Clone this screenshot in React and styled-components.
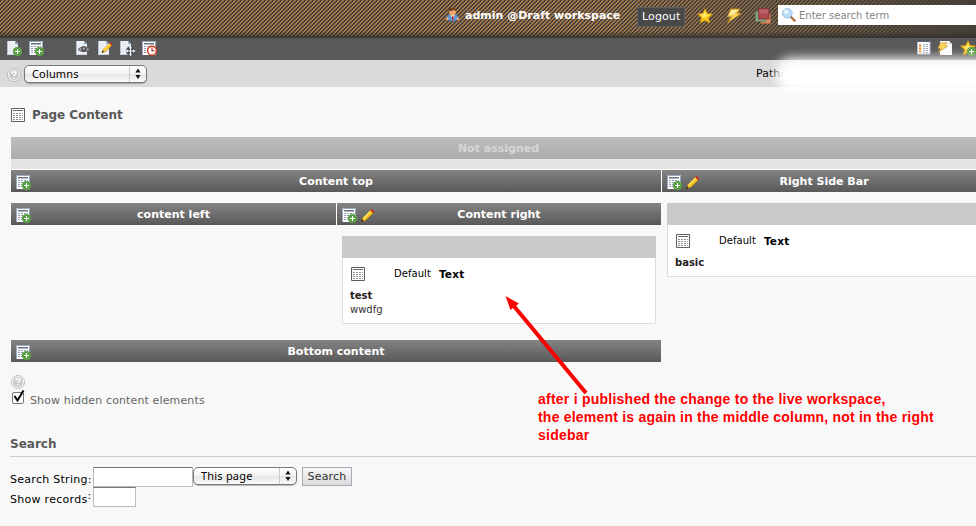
import React from "react";
import styled, { createGlobalStyle, css } from "styled-components";

const Global = createGlobalStyle`
  * { box-sizing: border-box; }
  html, body { margin: 0; overflow: hidden; background: #f8f8f8; }
  body { font-family: "DejaVu Sans", Verdana, sans-serif; font-size: 11px; color: #000; }
`;

const Page = styled.div`
  width: 976px;
  height: 526px;
  overflow: hidden;
  position: relative;
`;

const Text = styled.span`
  display: block;
  white-space: pre;
  line-height: 14px;
  font-size: ${(p) => p.$size || 11}px;
  font-weight: ${(p) => (p.$bold ? 700 : 400)};
  color: ${(p) => p.$color || "#000"};
  letter-spacing: ${(p) => p.$track || 0}px;
  ${(p) => p.$left !== undefined && css`margin-left: ${p.$left}px;`}
  ${(p) => p.$top !== undefined && css`margin-top: ${p.$top}px;`}
`;

const Svg = styled.svg`
  display: block;
  flex: none;
  width: ${(p) => p.$w || 16}px;
  height: ${(p) => p.$w || 16}px;
  margin-left: ${(p) => p.$left || 0}px;
  margin-top: ${(p) => p.$top || 0}px;
  overflow: visible;
`;

/* ---------- icons ---------- */

const Plus = () => (
  <g>
    <circle cx="11.5" cy="11.5" r="4.6" fill="#4f9a3c" />
    <circle cx="11.5" cy="11.5" r="3.900" fill="none" stroke="#6fae55" strokeWidth="0.7" />
    <path d="M11.5 9v5M9 11.5h5" stroke="#fff" strokeWidth="1.1" />
  </g>
);

const Sheet = () => (
  <g>
    <path d="M1 1h8l3 3v11h-11z" fill="#eef1f5" />
    <path d="M1.500 1v14" stroke="#b4c0d0" />
    <path d="M1 14.500h11" stroke="#ccd4df" />
    <path d="M3 4h5M3 6.500h7M3 9h7M3 11.500h7" stroke="#dfe5ec" />
    <path d="M9 1v3.200h3.200z" fill="#8fb0cf" />
  </g>
);

const Table = () => (
  <g>
    <path d="M1 1h14v14h-14z" fill="#fff" />
    <path d="M1.500 15v-13.500h13v8" stroke="#9aa7bd" fill="none" />
    <path d="M3 3h10v1.500h-10z" fill="#667180" />
    <path d="M3 6.500h10M3 8.500h10M3 10.500h10M3 12.500h10" stroke="#8f9cb3" strokeDasharray="2 1" />
  </g>
);

const NewPage = (p) => <Svg viewBox="0 0 16 16" {...p}><Sheet /><Plus /></Svg>;
const NewContent = (p) => <Svg viewBox="0 0 16 16" {...p}><Table /><Plus /></Svg>;

const ViewPage = (p) => (
  <Svg viewBox="0 0 16 16" {...p}>
    <Sheet />
    <path d="M3 9.500q5.500-5.500 12 0q-6 4.500-12 0z" fill="#a5a5a5" stroke="#666" strokeWidth="1" />
    <circle cx="9" cy="9" r="2.700" fill="#555" />
    <circle cx="9" cy="8.500" r="1" fill="#bbb" />
  </Svg>
);

const PencilShape = () => (
  <g>
    <path d="M1.500 14.500l1.600-4.200 8-8 3 2.900-8.200 8z" fill="#fcc81e" stroke="#b8720c" strokeWidth="0.6" />
    <path d="M3.700 10.700l8-7.700" stroke="#ffe97a" strokeWidth="1.200" />
    <path d="M11 2.300l1.500-1.300 2.800 2.600-1.400 1.600z" fill="#d3261c" />
    <path d="M1 15l1-3 2 1.800z" fill="#2a1a0d" />
  </g>
);

const Pencil = (p) => <Svg viewBox="0 0 16 16" {...p}><PencilShape /></Svg>;
const EditPage = (p) => (
  <Svg viewBox="0 0 16 16" {...p}>
    <Sheet />
    <g transform="translate(4 1.500) scale(.76)"><PencilShape /></g>
  </Svg>
);

const MovePage = (p) => (
  <Svg viewBox="0 0 16 16" {...p}>
    <Sheet />
    <circle cx="11.500" cy="11" r="4.600" fill="#444b59" />
    <path d="M11.500 7.500v7M8 11h7" stroke="#fff" strokeWidth="1" />
    <path d="M11.500 6l1.700 2.200h-3.400zM11.500 16l1.700-2.200h-3.400zM6.500 11l2.200-1.700v3.400zM16.500 11l-2.200-1.700v3.400z" fill="#fff" />
  </Svg>
);

const History = (p) => (
  <Svg viewBox="0 0 16 16" {...p}>
    <Table />
    <circle cx="11" cy="10.700" r="4.400" fill="#fff" stroke="#d8361f" strokeWidth="1.400" />
    <path d="M11 7.800v3h2.400" fill="none" stroke="#902010" strokeWidth="1.100" />
  </Svg>
);

const GrayTable = (p) => (
  <Svg viewBox="0 0 16 16" {...p}>
    <path d="M1.500 1.500h13v13h-13z" fill="#fff" stroke="#5b5f63" />
    <path d="M3 3.500h10" stroke="#666b70" />
    <path d="M3 6.500h10M3 8.500h10M3 10.500h10M3 12.500h10" stroke="#8b8f93" strokeDasharray="2 1" />
  </Svg>
);

const Bolt = () => (
  <path d="M5 1h9l-3.200 4.500h4.200l-13.500 9.500 4.200-6.200h-4.500z" fill="#fbd35a" stroke="#c89226" strokeWidth="0.800" />
);
const BoltIcon = (p) => (
  <Svg viewBox="0 0 16 16" {...p}>
    <Bolt /><path d="M5.800 2.200h5.500l-4 4.300h-4.500z" fill="#fff0a8" />
  </Svg>
);

const starPath = "M8 .8l2.100 4.800 5.300.5-4 3.600 1.300 5.300-4.700-2.700-4.700 2.700 1.300-5.300-4-3.600 5.300-.5z";
const Star = ({ plus, ...p }) => (
  <Svg viewBox="0 0 16 16" {...p}>
    <path d={starPath} fill="#fcc91b" stroke="#db970c" strokeWidth="0.800" />
    <path d="M8 2.500l1.500 4 3.500.5-4 2-4.500 1 1-2-2.500-1.500 3.700-.500z" fill="#ffe764" />
    {plus && <Plus />}
  </Svg>
);

const User = (p) => (
  <Svg viewBox="0 0 16 16" {...p}>
    <path d="M1.500 12.500q.5-4.500 4-4.500h5q3.500 0 4 4.500q-1 2.500-6.500 2.500t-6.500-2.500z" fill="#5a98da" stroke="#28598f" strokeWidth="0.500" />
    <path d="M6 8.500h4.500l-2.200 5z" fill="#eee" /><path d="M7.700 9.500h1.200l.5 3-1.200 1.500-1-1.500z" fill="#c6322b" />
    <circle cx="8" cy="5.700" r="3.600" fill="#eda873" />
    <path d="M3.800 5q0-4.300 4.300-4.300t4.200 4.300q-1-1.500-2.500-1.700q-4 1.200-6 1.700z" fill="#744017" />
    <circle cx="2.300" cy="12.600" r="1.500" fill="#eda873" /><circle cx="13.700" cy="12.600" r="1.500" fill="#eda873" />
  </Svg>
);

const Workspaces = (p) => (
  <Svg viewBox="0 0 16 16" {...p}>
    <path d="M6 6h9.500v9.500h-9.500z" fill="#dd9068" stroke="#a45e3d" strokeWidth="0.800" />
    <path d="M.5 3.500h10v10h-10z" fill="#86a982" stroke="#597a58" strokeWidth="0.800" />
    <path d="M3.500.5h10.500v10.500h-10.500z" fill="#ae4a50" stroke="#7d3339" strokeWidth="0.800" />
    <path d="M4.500 1.500h8.500v4h-8.500z" fill="#bd6266" />
  </Svg>
);

const Magnifier = (p) => (
  <Svg viewBox="0 0 16 16" {...p}>
    <path d="M10 10l3.600 3.600" stroke="#b8743d" strokeWidth="2.400" strokeLinecap="round" />
    <path d="M9.500 9.500l1.500 1.500" stroke="#777" strokeWidth="1.500" />
    <circle cx="6.300" cy="6.300" r="4.800" fill="#bcdcf8" stroke="#9dbfe4" strokeWidth="1" />
    <circle cx="5" cy="4.700" r="2.200" fill="#e7f5ff" />
  </Svg>
);

const ListIcon = (p) => (
  <Svg viewBox="0 0 16 16" {...p}>
    <path d="M1.500 1.500h12.500v12.500h-12.500z" fill="#fff" stroke="#aebcd4" />
    <path d="M1 1.500h13" stroke="#526179" />
    <path d="M3 5.500h2.200M3 8.500h2.200M3 11.500h2.200" stroke="#ef7c12" strokeWidth="2" />
    <path d="M7 4.500h5M7 6.500h5M7 8.500h5M7 10.500h5M7 12.500h5" stroke="#8590a3" strokeWidth="0.800" strokeDasharray="2 1" />
  </Svg>
);

const BoltPage = (p) => (
  <Svg viewBox="0 0 16 16" {...p}>
    <path d="M3 1h9l3 3v11h-12z" fill="#fafafa" /><path d="M12 1v3h3z" fill="#ccd3dc" />
    <g transform="translate(0 2) scale(.72)"><Bolt /></g>
  </Svg>
);

const Help = (p) => (
  <Svg viewBox="0 0 16 16" {...p}>
    <circle cx="8" cy="8" r="6.500" fill="#c8c8c8" stroke="#b4b4b4" strokeWidth="0.800" />
    <circle cx="8" cy="8" r="5.500" fill="none" stroke="#f5f5f5" strokeWidth="1.200" />
    <path d="M6 6.600q.1-1.900 2-1.900t2 1.500q0 .9-1 1.400t-1 1.300M8 10v1.500" stroke="#fff" strokeWidth="1.600" fill="none" />
  </Svg>
);

/* ---------- header bars ---------- */

const twill = `url("data:image/svg+xml,%3Csvg xmlns='http://www.w3.org/2000/svg' width='4' height='4' shape-rendering='crispEdges'%3E%3Cpath fill='%23454341' d='M0 0h4v4H0z'/%3E%3Cpath fill='%23a87946' d='M2 0h2v1H2zM1 1h2v1H1zM0 2h2v1H0zM0 3h1v1H0zM3 3h1v1H3z'/%3E%3C/svg%3E")`;

const TopBar = styled.header`
  height: 38px;
  display: flex;
  align-items: flex-start;
  background:
    linear-gradient(to bottom, rgba(50,48,46,0) 31px, rgba(50,48,46,.9) 38px),
    linear-gradient(to right, rgba(60,58,54,0) 600px, rgba(60,58,54,.25) 750px, rgba(60,58,54,.85) 976px),
    ${twill};
`;

const Logout = styled.button`
  width: 48px;
  height: 20px;
  margin: 7px 0 0 17px;
  padding: 0;
  display: flex;
  justify-content: center;
  align-items: center;
  border: 1px solid #626262;
  background: #484848;
  font-family: inherit;
`;

const SearchBox = styled.div`
  width: 220px;
  height: 20px;
  margin: 5px -22px 0 7px;
  display: flex;
  align-items: center;
  flex: none;
  background: #fff;
`;

const ToolBar = styled.nav`
  height: 22px;
  display: flex;
  align-items: flex-start;
  background: #595959;
`;

const FunctionBar = styled.div`
  height: 27px;
  display: flex;
  align-items: flex-start;
  background: #dadada;
`;

const Smudge = styled.div`
  position: absolute;
  left: 784px;
  top: 66px;
  width: 260px;
  height: 18px;
  border-radius: 8px;
  background: #fff;
  box-shadow: 0 0 11px 8px #fff;
`;

const Select = styled.div`
  width: ${(p) => p.$w}px;
  height: ${(p) => p.$h}px;
  margin-top: ${(p) => p.$top}px;
  margin-left: ${(p) => p.$left || 0}px;
  padding-left: 7px;
  display: flex;
  align-items: center;
  flex: none;
  border: 1px solid #777;
  border-radius: 5px;
  box-shadow: 0 1px 1px rgba(0,0,0,.25);
  background: linear-gradient(#fff, #f3f3f3 48%, #e6e6e6 52%, #fafafa);
  font-family: "Noto Sans", "Open Sans", sans-serif;
`;

const Arrows = styled.svg`
  display: block;
  width: 17px;
  height: 16px;
  margin-left: auto;
  border-left: 1px solid #c8c8c8;
`;

const Dropdown = ({ children, track, ...p }) => (
  <Select {...p}>
    <Text $track={track}>{children}</Text>
    <Arrows viewBox="0 0 16 16"><path d="M8 2.500l2.600 4h-5.200zM8 13l2.600-4h-5.200z" fill="#111" /></Arrows>
  </Select>
);

/* ---------- column grid ---------- */

const TitleRow = styled.div`
  height: 50px;
  padding: 20px 0 0 10px;
  display: flex;
  align-items: flex-start;
`;

const Grid = styled.main`
  width: 975px;
  margin-left: 11px;
`;

const Unassigned = styled.div`
  height: 22px;
  display: flex;
  align-items: center;
  justify-content: center;
  background: linear-gradient(#bebebe, #acacac);
`;

const UnassignedBody = styled.div`
  height: 11px;
  background: #e4e4e4;
  border-bottom: 1px solid #fff;
`;

const Columns = styled.div`
  display: grid;
  grid-template-columns: ${(p) => p.$cols};
  column-gap: 1px;
`;

const Cell = styled.section`
  height: ${(p) => p.$h}px;
  min-width: 0;
`;

const Spacer = styled.div`
  height: 11px;
`;

const Bar = styled.div`
  height: 22px;
  padding-left: 4px;
  display: flex;
  align-items: center;
  background: linear-gradient(#838383, #595959);
  box-shadow: -1px 0 0 #fff;
`;

const BarTitle = styled.div`
  flex: 1;
  display: flex;
  justify-content: center;
  padding-top: 2px;
  margin-left: ${(p) => p.$shift}px;
`;

const Card = styled.article`
  width: ${(p) => p.$w}px;
  height: ${(p) => p.$h}px;
  margin: 11px 0 0 5px;
  border: 1px solid #ddd;
  border-top: 0;
  background: #fff;
`;

const CardTop = styled.div`
  height: 22px;
  margin: 0 -1px;
  background: #c9c9c9;
`;

const CardHead = styled.div`
  display: flex;
  align-items: flex-start;
  height: 31px;
  padding: 8px 0 0 7px;
`;

const CardBody = styled.div`
  padding-left: 7px;
`;

const ColumnBar = ({ title, edit }) => (
  <Bar>
    <NewContent $top={2} />
    {edit && <Pencil $w={15} $left={3} $top={3} />}
    <BarTitle $shift={edit ? -38 : -20}><Text $bold $color="#fff">{title}</Text></BarTitle>
  </Bar>
);

const Element = ({ title, body, ...p }) => (
  <Card {...p}>
    <CardTop />
    <CardHead>
      <GrayTable />
      <Text $size={10} $left={28} $top={1} $track={0.05}>Default</Text>
      <Text $size={10.5} $bold $left={8} $top={1} $track={0.2}>Text</Text>
    </CardHead>
    <CardBody>
      <Text $size={10} $bold $color="#222">{title}</Text>
      {body && <Text $size={10} $color="#333">{body}</Text>}
    </CardBody>
  </Card>
);

/* ---------- options and search ---------- */

const Options = styled.div`
  height: 74px;
  padding: 12px 0 0 10px;
`;

const CheckRow = styled.div`
  display: flex;
  align-items: flex-start;
  height: 18px;
`;

const SearchHead = styled.div`
  display: flex;
  align-items: flex-start;
  height: 21px;
  margin-left: 10px;
  border-bottom: 1px solid #ccc;
`;

const FormArea = styled.form`
  padding-top: 10px;
`;

const FormRow = styled.div`
  height: 20px;
  margin-left: 10px;
  display: flex;
  align-items: flex-start;
`;

const Caption = styled.div`
  width: 83px;
  display: flex;
  padding-top: 6px;
`;

const Input = styled.div`
  width: ${(p) => p.$w}px;
  height: 20px;
  border: 1px solid #bbb;
  border-top: 1px solid #777;
  background: #fff;
`;

const Button = styled.button`
  width: 50px;
  height: 19px;
  margin: 0 0 0 5px;
  padding: 0;
  display: flex;
  align-items: center;
  justify-content: center;
  border: 1px solid #a8abb8;
  background: linear-gradient(#f6f6f6, #dcdcdc);
  font-family: inherit;
`;

const Note = styled.div`
  position: absolute;
  left: 538px;
  top: 390px;
  font: bold 14px/18px "Liberation Sans", Arial, sans-serif;
  color: #f00;
  white-space: pre;
`;

const NoteLine = styled.div`
  letter-spacing: ${(p) => p.$track}px;
`;

const Arrow = styled.svg`
  position: absolute;
  left: 500px;
  top: 290px;
  width: 100px;
  height: 110px;
`;

export default function App() {
  return (
    <Page>
      <Global />
      <TopBar>
        <User $w={15} $left={445} $top={7} />
        <Text $bold $color="#fff" $left={5} $top={9}>admin @Draft workspace</Text>
        <Logout><Text $color="#fff" $track={0.1}>Logout</Text></Logout>
        <Star $left={12} $top={8} />
        <BoltIcon $left={13} $top={8} />
        <Workspaces $left={13} $top={8} />
        <SearchBox>
          <Magnifier $left={3} />
          <Text $size={10} $color="#858585" $left={2} $top={2}>Enter search term</Text>
        </SearchBox>
      </TopBar>
      <ToolBar>
        <NewPage $left={6} $top={2} />
        <NewContent $left={6} $top={2} />
        <ViewPage $left={31} $top={2} />
        <EditPage $left={6} $top={2} />
        <MovePage $left={6} $top={2} />
        <History $left={6} $top={2} />
        <ListIcon $left={759} $top={2} />
        <BoltPage $left={5} $top={2} />
        <Star plus $left={7} $top={2} />
      </ToolBar>
      <FunctionBar>
        <Help $left={6} $top={7} />
        <Dropdown $w={123} $h={18} $top={5} $left={2} track={0.15}>Columns</Dropdown>
        <Text $left={609} $top={7}>Path:</Text>
      </FunctionBar>
      <Smudge />

      <TitleRow>
        <GrayTable />
        <Text $size={12} $bold $color="#585858" $left={6} $top={1} $track={-0.05}>Page Content</Text>
      </TitleRow>

      <Grid>
        <Unassigned><Text $bold $color="#d6d6d6" $top={2}>Not assigned</Text></Unassigned>
        <UnassignedBody />
        <Columns $cols="650px 324px">
          <Cell $h={192}>
            <ColumnBar title="Content top" />
            <Columns $cols="325px 324px">
              <Cell $h={148}><Spacer /><ColumnBar title="content left" /></Cell>
              <Cell $h={148}>
                <Spacer />
                <ColumnBar edit title="Content right" />
                <Element $w={314} $h={88} title="test" body="wwdfg" />
              </Cell>
            </Columns>
            <ColumnBar title="Bottom content" />
          </Cell>
          <Cell $h={192}>
            <ColumnBar edit title="Right Side Bar" />
            <Element $w={314} $h={74} title="basic" />
          </Cell>
        </Columns>
      </Grid>

      <Options>
        <Help />
        <CheckRow>
          <Svg viewBox="0 0 16 16">
            <rect x="2.500" y="2.500" width="11" height="11" rx="1.500" fill="#fff" stroke="#777" />
            <path d="M4.500 6l3 4.500 6-10" fill="none" stroke="#000" strokeWidth="2" />
          </Svg>
          <Text $color="#666" $left={4} $top={4} $track={0.13}>Show hidden content elements</Text>
        </CheckRow>
      </Options>
      <SearchHead><Text $size={12} $bold $color="#585858" $top={1}>Search</Text></SearchHead>
      <FormArea>
        <FormRow>
          <Caption><Text $track={0.28}>Search String:</Text></Caption>
          <Input $w={100} />
          <Dropdown $w={104} $h={18} $top={0} track={0.2}>This page</Dropdown>
          <Button><Text $color="#333" $track={0.2}>Search</Text></Button>
        </FormRow>
        <FormRow>
          <Caption><Text $track={0.28}>Show records</Text><Text $top={-4}>:</Text></Caption>
          <Input $w={43} />
        </FormRow>
      </FormArea>

      <Arrow viewBox="0 0 100 110">
        <path d="M86 103L13 15" stroke="#f00" strokeWidth="4" />
        <path d="M5.500 6l13.500 7.500-8.500 6.500z" fill="#f00" />
      </Arrow>
      <Note>
        <NoteLine $track={0.24}>after i published the change to the live workspace,</NoteLine>
        <NoteLine $track={0.21}>the element is again in the middle column, not in the right</NoteLine>
        <NoteLine $track={0.24}>sidebar</NoteLine>
      </Note>
    </Page>
  );
}
